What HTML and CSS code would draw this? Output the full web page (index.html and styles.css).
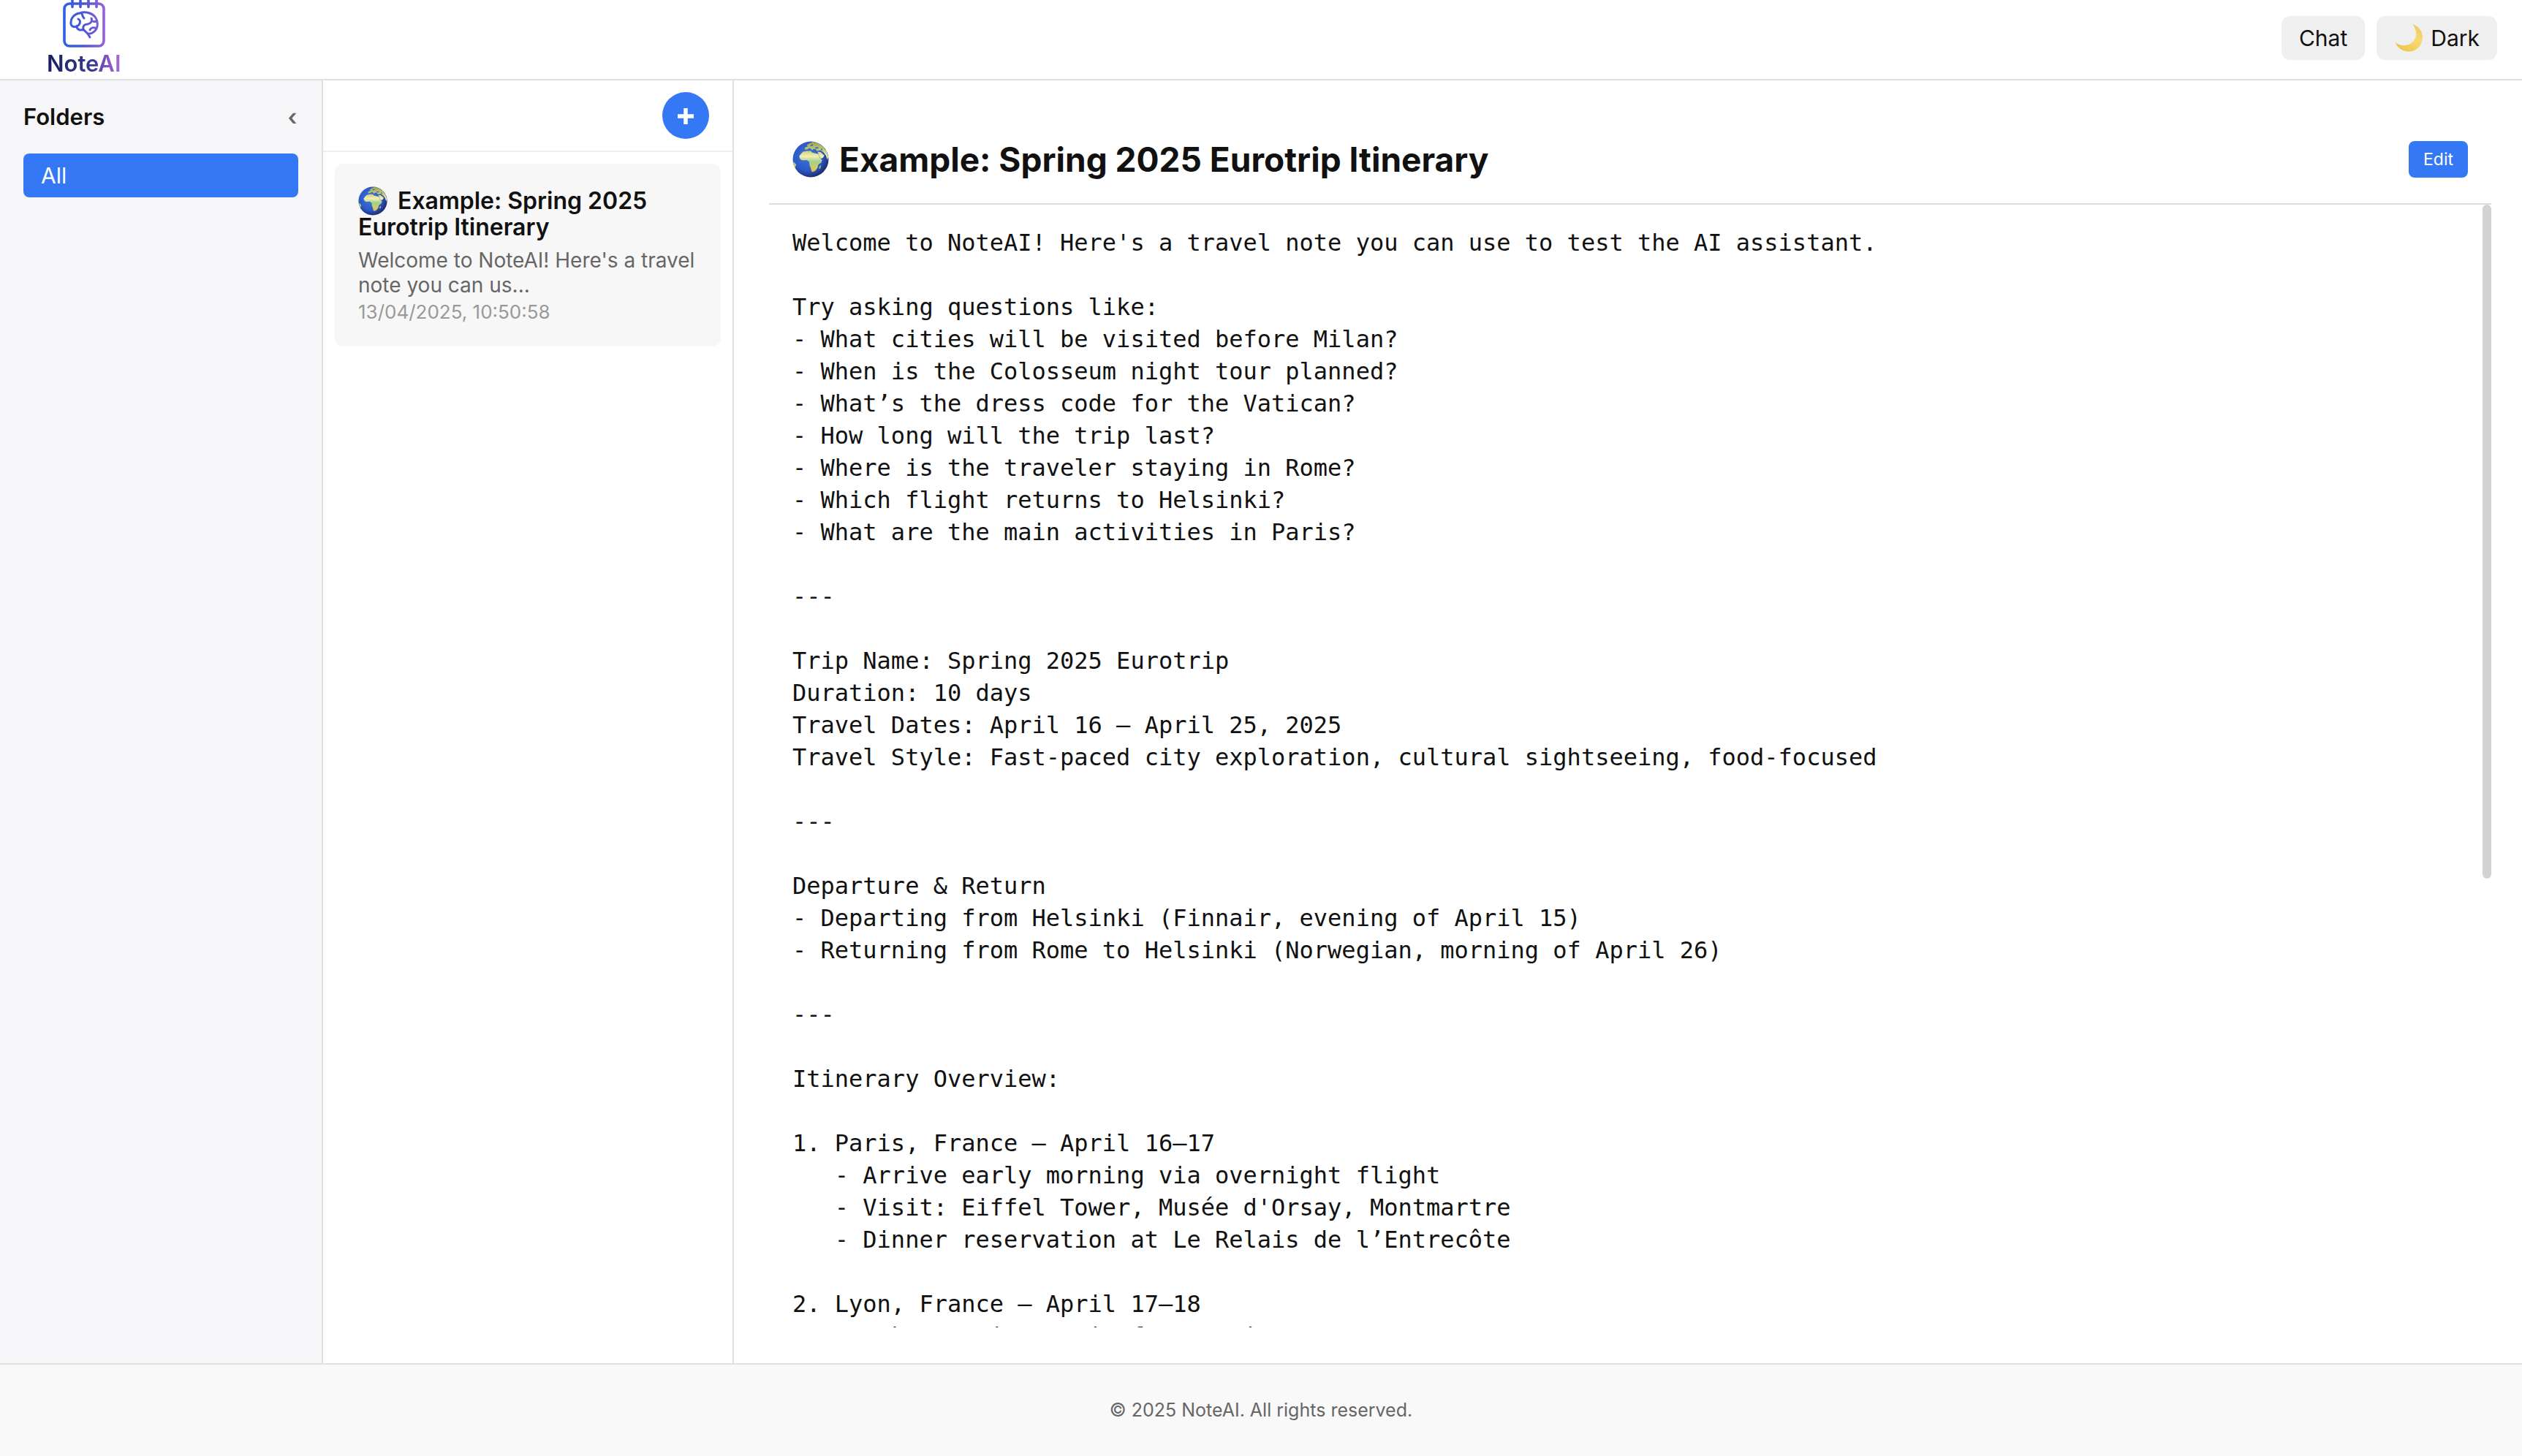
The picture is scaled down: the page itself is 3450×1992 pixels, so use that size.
FILE: index.html
```html
<!DOCTYPE html>
<html lang="en">
<head>
<meta charset="utf-8">
<title>NoteAI</title>
<link rel="stylesheet" href="styles.css">
</head>
<body>
<svg class="defs" width="0" height="0" aria-hidden="true">
  <defs>
    <radialGradient id="sea" cx="0.42" cy="0.42" r="0.62">
      <stop offset="0" stop-color="#3f78dc"/>
      <stop offset="0.65" stop-color="#2b58c6"/>
      <stop offset="1" stop-color="#1c2766"/>
    </radialGradient>
    <linearGradient id="land" x1="0" y1="0" x2="0" y2="48" gradientUnits="userSpaceOnUse">
      <stop offset="0" stop-color="#8f9c5c"/>
      <stop offset="0.25" stop-color="#c9cb74"/>
      <stop offset="0.42" stop-color="#f4efb4"/>
      <stop offset="0.56" stop-color="#a3d08c"/>
      <stop offset="0.75" stop-color="#d6cb62"/>
      <stop offset="1" stop-color="#b99a3c"/>
    </linearGradient>
    <symbol id="globe" viewBox="0 0 48 48">
      <circle cx="24" cy="24" r="23.5" fill="url(#sea)"/>
      <g fill="url(#land)">
        <path d="M14 14L19 13L24 13L26 15L30 16L34 17L36 22L39 25L38 28L34 31L33 35L30 39L27 40.500L25 40L24 35L22.600 32L22 27L19 25L13 25.500L10 23.500L9 20L11 17Z"/>
        <path d="M33 14L37 14.500L42 19L40 22L37 23L34.500 18Z"/>
        <path d="M35.500 33L37.500 32L36.500 36L35 36.500Z"/>
        <path d="M16 11L17 8L20 7.500L19 5L22 3L27 1L33 2.500L40 7L45 14L47 21L46 25L44 19L41 15L37 12L32 13L31 11L28 10L26 12L23 9L19 11Z"/>
        <path d="M0.700 27L3 28.500L5 31L3.500 35L2.500 34Z"/>
      </g>
      <path fill="none" stroke="#2f62c4" stroke-width="1.500" d="M24 6l3-1M30 9l4 0M38 10l1 2"/>
    </symbol>
  </defs>
</svg>

<header class="topbar">
  <a class="brand" href="#">
    <svg class="brand-icon" viewBox="0 0 60 66" aria-hidden="true">
      <defs>
        <linearGradient id="ink" x1="0" y1="0" x2="60" y2="0" gradientUnits="userSpaceOnUse">
          <stop offset="0" stop-color="#2b62e3"/>
          <stop offset="0.5" stop-color="#4c55d6"/>
          <stop offset="1" stop-color="#9a62d8"/>
        </linearGradient>
      </defs>
      <g fill="none" stroke="url(#ink)" stroke-width="3.6" stroke-linecap="round" stroke-linejoin="round">
        <rect x="3" y="5" width="54" height="58" rx="7"/>
        <path d="M14 -2V9.500M25 -2V9.400M36 -2V9.400M47 -2V9.500"/>
        <g stroke-width="3">
          <path d="M20 36C15 38 11.500 35 12 31C12 24 17 19 24 18C32 15 41 18 45 23C50 30 49 39 44 43C41 46 38 46.500 35 46L38 51"/>
          <path d="M20 36C20 40 24 42 29 40.500C31 42 33 44 35 46"/>
          <path d="M22 26C26 28 25 34 20 36M27 19C28 21 28 23 30 25M40 25C42 29 39 32 35 33C30 33 28 36 29 40M47 29.500H43M46 38.500C42 37 39 38 38 41"/>
        </g>
      </g>
    </svg>
    <span class="brand-name">NoteAI</span>
  </a>
  <nav class="actions">
    <button class="btn" type="button">Chat</button>
    <button class="btn" type="button">
      <svg class="moon" viewBox="0 0 40 40" aria-hidden="true">
        <defs>
          <linearGradient id="glow" x1="1" y1="0" x2="0.3" y2="1">
            <stop offset="0" stop-color="#e9c455"/>
            <stop offset="0.45" stop-color="#f6dc74"/>
            <stop offset="1" stop-color="#f0c64c"/>
          </linearGradient>
        </defs>
        <path d="M25 1C34 4 39 11 39 19.500C39 30 30.500 38.500 20 38.500C11 38.500 4 33 1.500 25.500C7 31 17 32 24 26.500C32 20.500 32 9 25 1Z" fill="url(#glow)"/>
      </svg>
      Dark
    </button>
  </nav>
</header>

<div class="workspace">
  <aside class="folders">
    <div class="folders-head">
      <h2 class="folders-title">Folders</h2>
      <button class="collapse" type="button" aria-label="Collapse folders">‹</button>
    </div>
    <button class="folder" type="button">All</button>
  </aside>

  <section class="notes" aria-label="Notes">
    <div class="notes-bar">
      <button class="add" type="button" aria-label="New note">
        <svg viewBox="0 0 24 24" aria-hidden="true"><path d="M12 1V25M0 13H24" fill="none" stroke="#fff" stroke-width="6"/></svg>
      </button>
    </div>
    <article class="card">
      <h3 class="card-title"><svg class="card-globe" aria-hidden="true"><use href="#globe"/></svg>Example: Spring 2025 Eurotrip Itinerary</h3>
      <p class="card-text">Welcome to NoteAI! Here's a travel note you can us...</p>
      <time class="card-date">13/04/2025, 10:50:58</time>
    </article>
  </section>

  <main class="note">
    <div class="note-head">
      <h1 class="note-title"><svg class="note-globe" aria-hidden="true"><use href="#globe"/></svg>Example: Spring 2025 Eurotrip Itinerary</h1>
      <button class="edit" type="button">Edit</button>
    </div>
    <div class="note-scroll">
      <pre class="note-body">Welcome to NoteAI! Here's a travel note you can use to test the AI assistant.

Try asking questions like:
- What cities will be visited before Milan?
- When is the Colosseum night tour planned?
- What’s the dress code for the Vatican?
- How long will the trip last?
- Where is the traveler staying in Rome?
- Which flight returns to Helsinki?
- What are the main activities in Paris?

---

Trip Name: Spring 2025 Eurotrip
Duration: 10 days
Travel Dates: April 16 – April 25, 2025
Travel Style: Fast-paced city exploration, cultural sightseeing, food-focused

---

Departure &amp; Return
- Departing from Helsinki (Finnair, evening of April 15)
- Returning from Rome to Helsinki (Norwegian, morning of April 26)

---

Itinerary Overview:

1. Paris, France – April 16–17
   - Arrive early morning via overnight flight
   - Visit: Eiffel Tower, Musée d'Orsay, Montmartre
   - Dinner reservation at Le Relais de l’Entrecôte

2. Lyon, France – April 17–18
   - Take morning train from Paris</pre>
      <span class="scroll-thumb"></span>
    </div>
  </main>
</div>

<footer class="footer">© 2025 NoteAI. All rights reserved.</footer>
</body>
</html>
```
FILE: styles.css
```css
* {
  box-sizing: border-box;
}

body {
  margin: 0;
  height: 100vh;
  display: flex;
  flex-direction: column;
  background: #fff;
  color: #111;
  font-family: Inter, "Liberation Sans", sans-serif;
}

h1, h2, h3, p, pre {
  margin: 0;
}

button {
  border: 0;
  padding: 0;
  font: inherit;
  color: inherit;
  cursor: pointer;
}

svg {
  display: block;
}

.defs {
  position: absolute;
}

/* Top bar */
.topbar {
  flex: none;
  display: flex;
  align-items: flex-start;
  justify-content: space-between;
  padding: 0 34px 0 64px;
  border-bottom: 2px solid #e0e0e0;
}

.brand {
  display: flex;
  flex-direction: column;
  align-items: center;
  text-decoration: none;
}

.brand-icon {
  width: 60px;
  height: 66px;
}

.brand-name {
  font-size: 31px;
  line-height: 42px;
  font-weight: 600;
  background: linear-gradient(90deg, #16205f 0%, #3a3a94 65%, #7a4fb8 78%, #a86bd4 100%);
  background-clip: text;
  -webkit-background-clip: text;
  color: transparent;
}

.actions {
  display: flex;
  gap: 16px;
  padding-top: 22px;
}

.btn {
  display: flex;
  align-items: center;
  gap: 10px;
  height: 60px;
  padding: 0 24px;
  border-radius: 12px;
  background: #efefef;
  font-size: 30px;
}

.moon {
  width: 40px;
  height: 40px;
}

/* Three columns */
.workspace {
  flex: 1;
  min-height: 0;
  display: flex;
}

.folders {
  flex: none;
  width: 442px;
  padding: 30px 32px;
  border-right: 2px solid #e0e0e0;
  background: #f6f6f9;
}

.folders-head {
  display: flex;
  align-items: center;
  justify-content: space-between;
  margin-bottom: 30px;
}

.folders-title {
  font-size: 31px;
  line-height: 40px;
  font-weight: 600;
}

.collapse {
  width: 16px;
  background: none;
  color: #666;
  font-size: 31px;
  line-height: 40px;
  font-weight: 600;
}

.folder {
  display: block;
  width: 100%;
  padding: 0 24px;
  border-radius: 8px;
  background: #3478f6;
  color: #fff;
  font-size: 30px;
  line-height: 60px;
  text-align: left;
}

.notes {
  flex: none;
  width: 562px;
  border-right: 2px solid #e0e0e0;
}

.notes-bar {
  display: flex;
  justify-content: flex-end;
  padding: 16px 32px;
  border-bottom: 2px solid #eee;
}

.add {
  display: grid;
  place-items: center;
  width: 64px;
  height: 64px;
  border-radius: 50%;
  background: #3478f6;
}

.add svg {
  width: 22px;
  height: 22px;
  overflow: visible;
}

.card {
  margin: 16px;
  padding: 33px 32px 30px;
  border-radius: 12px;
  background: #f7f7f7;
}

.card-title {
  font-size: 32px;
  line-height: 36px;
  font-weight: 600;
}

.card-globe {
  display: inline-block;
  width: 40px;
  height: 40px;
  margin: -8px 14px -4px 0;
  vertical-align: middle;
}

.card-text {
  margin-top: 10px;
  color: #666;
  font-size: 28px;
  line-height: 34px;
}

.card-date {
  display: block;
  margin-top: 3px;
  color: #999;
  font-size: 26px;
  line-height: 34px;
}

/* Open note */
.note {
  flex: 1;
  min-width: 0;
  display: flex;
  flex-direction: column;
  padding: 48px 42px 49px 48px;
}

.note-head {
  display: flex;
  align-items: center;
  justify-content: space-between;
  padding: 32px;
  border-bottom: 2px solid #ddd;
}

.note-title {
  display: flex;
  align-items: center;
  gap: 14px;
  font-size: 46px;
  line-height: 56px;
  font-weight: 700;
}

.note-globe {
  width: 50px;
  height: 50px;
}

.edit {
  padding: 0 20px;
  border-radius: 8px;
  background: #3478f6;
  color: #fff;
  font-size: 23px;
  line-height: 50px;
}

.note-scroll {
  position: relative;
  flex: 1;
  min-height: 0;
}

.note-body {
  height: 100%;
  overflow-y: auto;
  scrollbar-width: none;
  padding: 30px 32px 0;
  font-family: "DejaVu Sans Mono", "Liberation Mono", monospace;
  font-size: 32px;
  line-height: 44px;
}

.scroll-thumb {
  position: absolute;
  top: 0;
  right: 0;
  width: 12px;
  height: 60%;
  border-radius: 6px;
  background: #d3d3d3;
}

/* Footer */
.footer {
  flex: none;
  padding: 46px 32px 47px;
  border-top: 2px solid #e0e0e0;
  background: #f9f9f9;
  color: #666;
  font-size: 25px;
  line-height: 32px;
  text-align: center;
}
```
